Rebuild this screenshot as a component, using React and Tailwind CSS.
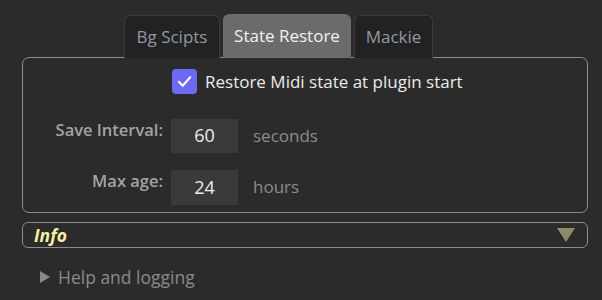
export default function App() {
  const font = { fontFamily: '"Open Sans", "Noto Sans", sans-serif' };

  return (
    <div className="w-[602px] h-[300px] bg-[#2b2b2b] overflow-hidden" style={font}>
      {/* tabs */}
      <div className="flex items-end gap-[3px] pl-[124px] pt-[14px] h-[58px]">
        <div className="w-[96px] h-[43px] rounded-t-[6px] border border-b-0 border-[#3a3a3a] bg-[#222222] flex items-center justify-center text-[17px] text-[#8f9aa3]">
          Bg Scipts
        </div>
        <div className="w-[128px] h-[44px] rounded-t-[6px] bg-[#6b6b6b] flex items-center justify-center text-[17px] text-[#f2f2f2]">
          State Restore
        </div>
        <div className="w-[79px] h-[43px] rounded-t-[6px] border border-b-0 border-[#3a3a3a] bg-[#222222] flex items-center justify-center text-[17px] text-[#8f9aa3]">
          Mackie
        </div>
      </div>

      {/* panel */}
      <div className="-mt-[1px] ml-[22px] w-[566px] h-[156px] border border-[#8c8c8c] rounded-[7px]">
        <div className="flex items-center gap-[8px] pl-[149px] pt-[11px]">
          <div className="w-[25px] h-[25px] rounded-[4px] bg-[#6e69f2] flex items-center justify-center">
            <svg width="17" height="17" viewBox="0 0 24 24" fill="none" stroke="#ffffff" strokeWidth="3" strokeLinecap="round" strokeLinejoin="round">
              <polyline points="4 12.5 9.5 18 20 6" />
            </svg>
          </div>
          <span className="text-[17px] text-[#ececec]">Restore Midi state at plugin start</span>
        </div>

        <div className="grid grid-cols-[140px_67px_auto] gap-x-[8px] gap-y-[17px] items-center mt-[24px]">
          <span className="text-right text-[16.5px] font-semibold text-[#a3a3a3] -mt-[11px]">Save Interval:</span>
          <div className="h-[34px] bg-[#3a3a3a] flex items-center justify-center text-[18px] text-[#ededed]">60</div>
          <span className="pl-[7px] text-[17px] text-[#8c8c8c]">seconds</span>

          <span className="text-right text-[16.5px] font-semibold text-[#a3a3a3] -mt-[11px]">Max age:</span>
          <div className="h-[35px] bg-[#3a3a3a] flex items-center justify-center text-[18px] text-[#ededed]">24</div>
          <span className="pl-[7px] text-[17px] text-[#8c8c8c]">hours</span>
        </div>
      </div>

      {/* info bar */}
      <div className="mt-[9px] ml-[22px] w-[566px] h-[26px] border border-[#8c8c8c] rounded-[6px] flex items-center justify-between pl-[11px] pr-[12px]">
        <span className="text-[17.5px] font-bold italic text-[#f6f0a0]">Info</span>
        <svg width="18" height="14" viewBox="0 0 18 14">
          <polygon points="0 0 18 0 9 14" fill="#8d8c6a" />
        </svg>
      </div>

      {/* help */}
      <div className="flex items-center gap-[8px] pl-[40px] mt-[16px]">
        <svg width="10" height="12" viewBox="0 0 10 12">
          <polygon points="0 0 10 6 0 12" fill="#8a8a8a" />
        </svg>
        <span className="text-[17.5px] text-[#8a8a8a]">Help and logging</span>
      </div>
    </div>
  );
}
